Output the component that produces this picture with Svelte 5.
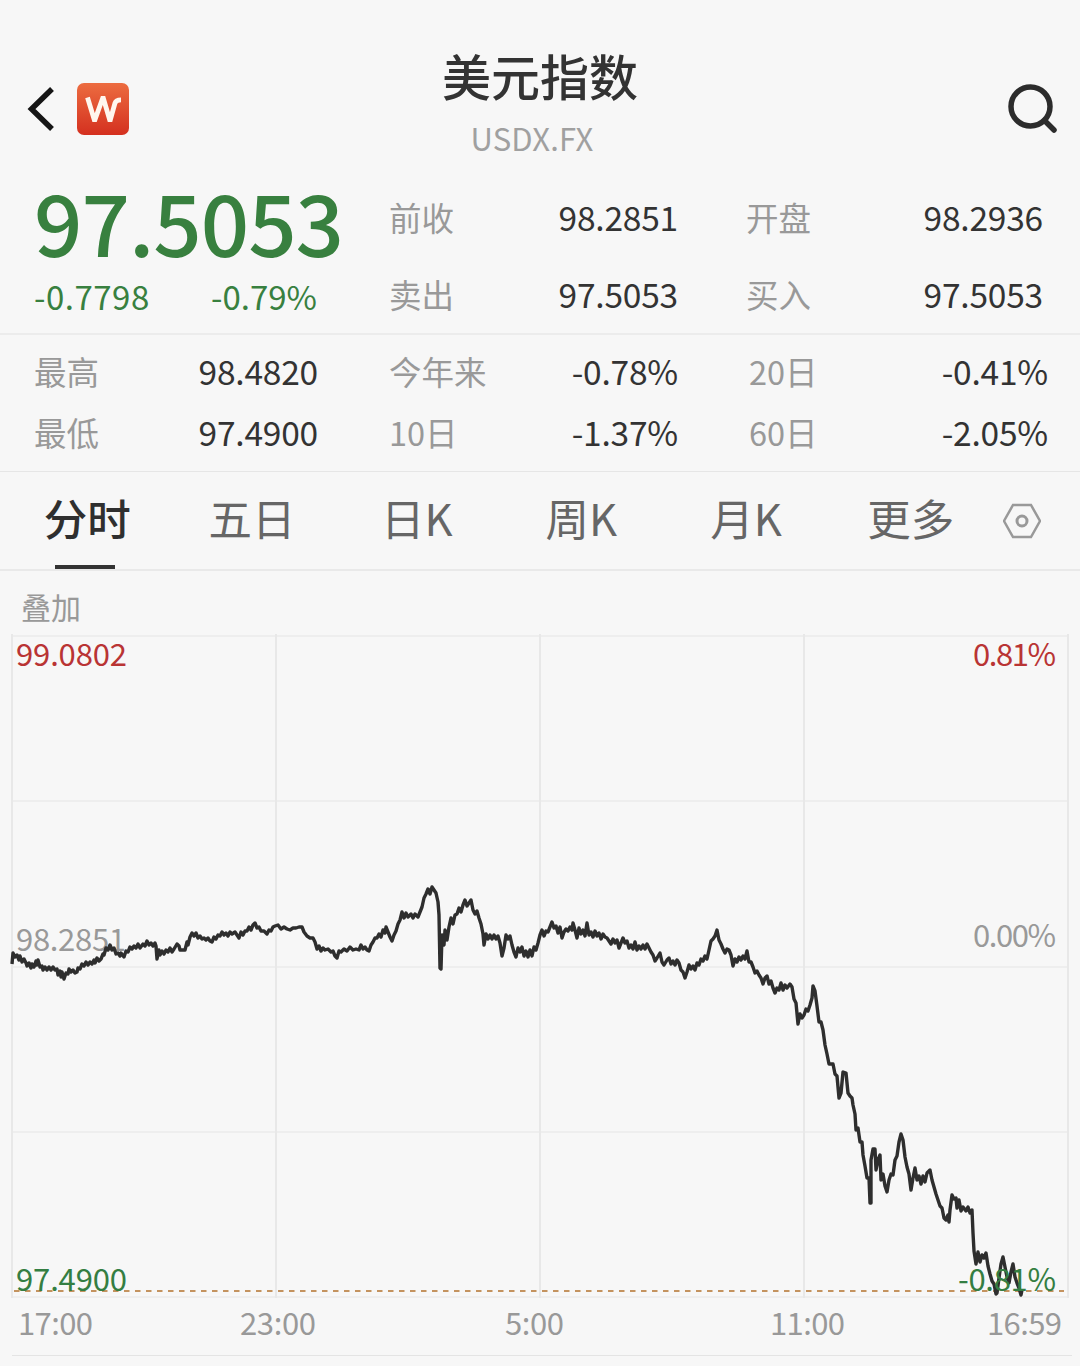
<script>
  const quotes = [
    { label: "前收", value: "98.2851" },
    { label: "开盘", value: "98.2936" },
    { label: "卖出", value: "97.5053" },
    { label: "买入", value: "97.5053" }
  ];

  const stats = [
    { label: "最高", value: "98.4820" },
    { label: "今年来", value: "-0.78%" },
    { label: "20日", value: "-0.41%" },
    { label: "最低", value: "97.4900" },
    { label: "10日", value: "-1.37%" },
    { label: "60日", value: "-2.05%" }
  ];

  const tabs = ["分时", "五日", "日K", "周K", "月K", "更多"];
  let active = "分时";

  const columns = [12, 276, 540, 804, 1068];
  const rows = [10, 175, 341, 506, 671];

  const times = [
    { x: 18, width: 75, text: "17:00" },
    { x: 240, width: 76, text: "23:00" },
    { x: 505, width: 59, text: "5:00" },
    { x: 770, width: 75, text: "11:00" },
    { x: 987, width: 75, text: "16:59" }
  ];

  // x,y pairs, y counted from 626px above the plot
  const prices = `
    12,964 13,953 15,957 17,955 19,960 20,956 22,962 24,959 26,963 27,966 29,963 31,968 32,964
    34,967 36,961 37,965 38,960 40,967 42,966 43,970 45,967 47,970 49,967 51,970 53,967 55,970
    57,969 58,975 60,971 61,977 62,972 64,979 66,973 68,974 69,969 71,972 73,970 75,973 77,972
    78,968 80,969 82,964 84,966 86,962 88,965 90,962 92,964 94,960 95,963 97,958 99,961 101,959
    103,954 104,955 106,948 108,950 110,945 112,950 114,948 116,954 118,953 120,956 121,953
    124,957 126,951 128,952 130,947 132,949 134,946 136,948 138,944 140,948 143,944 145,946
    147,941 149,945 151,943 153,946 155,943 156,946 157,959 159,950 160,955 162,951 164,954
    166,950 168,952 170,948 172,952 174,949 177,944 179,946 180,950 183,950 185,950 187,942
    188,945 190,937 192,933 194,936 196,933 198,938 200,936 202,939 204,938 206,940 208,938
    210,941 212,942 214,937 216,939 218,935 220,936 222,932 224,935 226,933 228,936 230,932
    232,934 235,932 237,935 239,938 241,932 243,935 245,931 247,931 249,927 251,930 253,925
    255,923 257,928 259,927 261,931 264,931 267,934 269,930 271,931 273,927 275,926 278,925
    281,929 284,927 287,929 290,930 293,928 296,928 299,927 302,927 304,932 307,936 310,938
    313,938 315,942 317,949 319,946 321,951 323,948 325,950 328,949 331,952 333,951 335,956
    337,958 339,951 341,952 344,949 347,951 350,947 353,950 356,949 359,950 361,945 363,949
    365,947 367,950 369,951 371,945 373,942 375,938 377,938 379,934 381,937 383,930 385,933
    386,927 388,932 390,937 392,941 394,935 396,931 398,924 400,920 402,912 404,918 406,913
    408,917 411,914 413,918 415,914 418,917 420,912 422,907 424,898 426,894 428,889 430,894
    432,887 434,890 436,893 438,902 439,915 440,968 441,969 442,935 444,945 445,930 447,940
    449,927 451,918 453,924 455,915 457,914 459,908 461,912 463,905 465,900 467,906 469,903
    471,900 473,910 475,914 477,911 479,918 481,924 483,934 484,945 486,934 488,939 490,935
    492,939 494,935 496,939 498,936 500,943 502,956 504,948 506,935 508,939 510,936 512,945
    514,952 516,957 518,948 520,952 522,947 524,956 526,951 528,957 530,950 532,956 534,947
    536,950 538,943 540,935 542,930 544,936 546,931 548,932 550,927 552,922 554,928 556,926
    558,933 560,927 562,938 564,932 566,929 568,931 570,927 572,930 573,923 575,930 577,938
    579,928 581,934 583,930 585,936 587,923 589,935 591,932 593,937 595,931 597,936 599,933
    601,939 603,934 605,937 607,938 609,941 611,944 613,939 615,943 617,940 619,948 621,943
    623,938 625,943 627,941 629,948 631,945 633,949 635,942 637,950 639,946 641,949 643,945
    645,949 647,944 649,948 651,952 653,955 655,961 657,958 660,953 662,962 664,965 667,960
    669,958 671,964 673,961 675,965 677,960 679,963 681,970 683,972 685,978 687,972 689,965
    691,969 693,966 695,970 697,963 699,965 701,959 703,961 705,956 707,959 709,950 711,941
    713,939 715,936 717,930 719,940 721,944 723,949 725,953 727,949 729,950 731,955 733,966
    735,959 737,962 739,957 741,960 743,956 745,959 747,951 749,962 751,962 753,967 755,973
    757,971 759,975 761,978 763,984 765,978 767,976 769,984 771,981 773,988 775,993 777,988
    779,990 781,983 783,990 785,985 787,988 790,984 792,987 794,999 796,1003 798,1024 800,1014
    802,1018 804,1015 806,1009 808,1011 810,1005 812,998 813,986 815,991 817,1006 819,1022
    821,1022 823,1030 825,1045 827,1054 829,1064 831,1064 833,1064 835,1074 837,1076 839,1098
    841,1093 843,1072 846,1073 848,1093 850,1096 852,1098 853,1105 855,1114 856,1130 858,1128
    860,1142 862,1142 863,1155 865,1166 867,1178 869,1178 870,1203 871,1203 871,1160 873,1149
    875,1149 876,1170 878,1160 880,1155 881,1180 883,1174 885,1186 887,1192 889,1180 891,1174
    893,1175 895,1160 897,1156 899,1142 901,1134 903,1140 905,1157 907,1167 909,1174 911,1190
    913,1178 915,1168 917,1180 919,1176 921,1184 923,1176 925,1182 927,1173 930,1170 932,1180
    934,1187 936,1194 938,1200 940,1206 942,1208 944,1218 946,1220 948,1215 949,1222 950,1210
    952,1195 954,1199 956,1198 957,1208 959,1200 961,1211 963,1207 966,1211 968,1207 970,1213
    972,1210 973,1233 974,1251 976,1264 978,1252 980,1262 982,1255 984,1258 986,1253 988,1266
    990,1274 992,1281 994,1284 996,1294 997,1293 999,1278 1001,1264 1003,1257 1005,1267
    1007,1277 1009,1283 1011,1272 1013,1264 1015,1277 1017,1283 1019,1288 1021,1295 1022,1290`;
</script>

<div class="page">
  <header>
    <div class="nav">
      <svg class="back" viewBox="0 0 28 46">
        <path d="M25 3 L4.5 23 L25 43" />
      </svg>
      <svg class="logo" viewBox="0 0 52 52">
        <defs>
          <linearGradient id="logo-fill" x1="0" y1="0" x2="0" y2="1">
            <stop offset="0" stop-color="#ec6c40" />
            <stop offset="1" stop-color="#d4301f" />
          </linearGradient>
        </defs>
        <rect width="52" height="52" rx="7" fill="url(#logo-fill)" />
        <path d="M10.5 14.5 L17.2 36.5 H18 L25.6 15.5 H26.4 L32.6 36.5 H33.4 L38 20 Q39 16.8 44 16.8" />
      </svg>
    </div>
    <div class="title">
      <h1>美元指数</h1>
      <p>USDX.FX</p>
    </div>
    <svg class="search" viewBox="0 0 52 52">
      <circle cx="23.5" cy="23.5" r="19.5" />
      <path d="M37.5 37.5 L47 47" />
    </svg>
  </header>

  <section class="quote">
    <div class="last">
      <strong>97.5053</strong>
      <div class="change">
        <span>-0.7798</span>
        <span>-0.79%</span>
      </div>
    </div>
    <dl>
      {#each quotes as { label, value }}
        <div>
          <dt>{label}</dt>
          <dd>{value}</dd>
        </div>
      {/each}
    </dl>
  </section>

  <dl class="stats">
    {#each stats as { label, value }}
      <div>
        <dt>{label}</dt>
        <dd>{value}</dd>
      </div>
    {/each}
  </dl>

  <nav class="tabs">
    {#each tabs as tab}
      <button class:active={tab === active} on:click={() => (active = tab)}>{tab}</button>
    {/each}
    <svg class="settings" viewBox="0 0 38 36">
      <path d="M10 2 H28 L37 18 L28 34 H10 L1 18 Z" />
      <circle cx="19" cy="18" r="5" />
    </svg>
  </nav>

  <p class="overlay">叠加</p>

  <svg class="chart" viewBox="0 0 1080 740">
    <g class="grid">
      {#each rows as y}
        <line class="row" x1="12" x2="1068" y1={y} y2={y} />
      {/each}
      {#each columns as x}
        <line x1={x} x2={x} y1="8" y2="672" />
      {/each}
    </g>

    <text class="muted" x="16" y="325" textLength="110">98.2851</text>
    <text class="muted" x="973" y="321" textLength="83">0.00%</text>
    <line class="last-price" x1="14" x2="1064" y1="665" y2="665" />
    <polyline class="price" transform="translate(0 -626)" points={prices.trim()} />
    <text class="up" x="16" y="40" textLength="111">99.0802</text>
    <text class="up" x="973" y="40" textLength="83">0.81%</text>
    <text class="down" x="16" y="665" textLength="111">97.4900</text>
    <text class="down" x="958" y="665" textLength="98">-0.81%</text>

    {#each times as { x, width, text }}
      <text class="muted" {x} y="709" textLength={width}>{text}</text>
    {/each}
    <line class="bottom" x1="12" x2="1072" y1="729.5" y2="729.5" />
  </svg>
</div>

<style>
  :global(body) {
    background: #f7f7f7;
  }

  .page {
    width: 1080px;
    height: 1366px;
    overflow: hidden;
    background: #f7f7f7;
    color: #333;
    font-family: "Noto Sans CJK SC", "Noto Sans", sans-serif;
  }

  h1,
  p,
  dl,
  dd {
    margin: 0;
  }

  header {
    display: grid;
    grid-template-columns: 340px 1fr 340px;
    height: 180px;
  }

  .nav {
    display: flex;
    align-items: center;
    gap: 22px;
    height: 52px;
    padding: 83px 0 0 27px;
  }

  svg {
    display: block;
    fill: none;
  }

  .back {
    width: 28px;
    height: 46px;
    stroke: #161616;
    stroke-width: 5.5;
  }

  .logo {
    width: 52px;
    height: 52px;
  }

  .logo path {
    stroke: #fff6ee;
    stroke-width: 4.8;
    stroke-linejoin: miter;
  }

  .title {
    text-align: center;
  }

  h1 {
    padding-top: 45px;
    font-size: 49px;
    font-weight: 500;
    line-height: 60px;
  }

  .title p {
    margin: 11px 16px 0 0;
    color: #a0a0a0;
    font-size: 31px;
    line-height: 44px;
    letter-spacing: 0.2px;
  }

  .search {
    width: 52px;
    height: 52px;
    margin: 83px 0 0 267px;
    stroke: #2c2c2c;
    stroke-width: 5.5;
    stroke-linecap: round;
  }

  .quote {
    display: flex;
    height: 153px;
    border-bottom: 2px solid #ececec;
  }

  .last {
    width: 355px;
    padding-left: 34px;
    color: #38803f;
  }

  .last strong {
    display: block;
    height: 92px;
    font-size: 85px;
    font-weight: 500;
    line-height: 80px;
    letter-spacing: -1px;
  }

  .change {
    display: flex;
    gap: 60px;
    font-size: 33px;
    line-height: 49px;
    letter-spacing: 0.5px;
  }

  .change span:last-child {
    letter-spacing: 0;
  }

  .change span:first-child {
    width: 117px;
  }

  .quote dl {
    display: grid;
    grid-template-columns: 289px 297px;
    grid-auto-rows: 77px;
    column-gap: 68px;
  }

  dl div {
    display: flex;
    justify-content: space-between;
  }

  dt {
    color: #999;
    font-size: 32.5px;
  }

  dd {
    font-size: 33.5px;
    letter-spacing: -0.2px;
  }

  .quote dl div {
    line-height: 74px;
  }

  .stats {
    display: grid;
    grid-template-columns: 284px 289px 299px;
    grid-auto-rows: 60.5px;
    column-gap: 71px;
    height: 130px;
    padding: 6px 0 0 34px;
    border-bottom: 1px solid #e6e6e6;
    line-height: 60px;
  }

  .tabs {
    display: flex;
    align-items: center;
    height: 97px;
    padding-left: 5px;
    border-bottom: 2px solid #e9e9e9;
  }

  .tabs button {
    position: relative;
    width: 164.7px;
    height: 97px;
    padding: 0 0 6px;
    border: none;
    background: none;
    color: #666;
    font-family: inherit;
    font-size: 43.5px;
    line-height: 91px;
  }

  .tabs .active {
    color: #2f2f2f;
    font-weight: 500;
  }

  .tabs .active::after {
    content: "";
    position: absolute;
    bottom: 0;
    left: 50px;
    width: 60px;
    height: 4px;
    background: #333;
  }

  .settings {
    width: 38px;
    height: 36px;
    margin-left: 10px;
    stroke: #999;
    stroke-width: 2.5;
  }

  .settings circle {
    stroke-width: 3;
  }

  .overlay {
    height: 55px;
    padding-left: 21px;
    color: #999;
    font-size: 30px;
    line-height: 70px;
  }

  .chart {
    width: 1080px;
    height: 740px;
  }

  .chart text {
    font-size: 31px;
  }

  .grid line {
    stroke: #e8e8e8;
    stroke-width: 2;
  }

  .grid .row {
    stroke: #eeeeee;
  }

  .muted {
    fill: #999;
  }

  .up {
    fill: #b93434;
  }

  .down {
    fill: #347e42;
  }

  .price {
    stroke: #2e2e2e;
    stroke-width: 3.4;
    stroke-linejoin: round;
  }

  .last-price {
    stroke: #c4935f;
    stroke-width: 2;
    stroke-dasharray: 5.5 5.5;
  }

  .bottom {
    stroke: #e4e4e4;
  }
</style>
